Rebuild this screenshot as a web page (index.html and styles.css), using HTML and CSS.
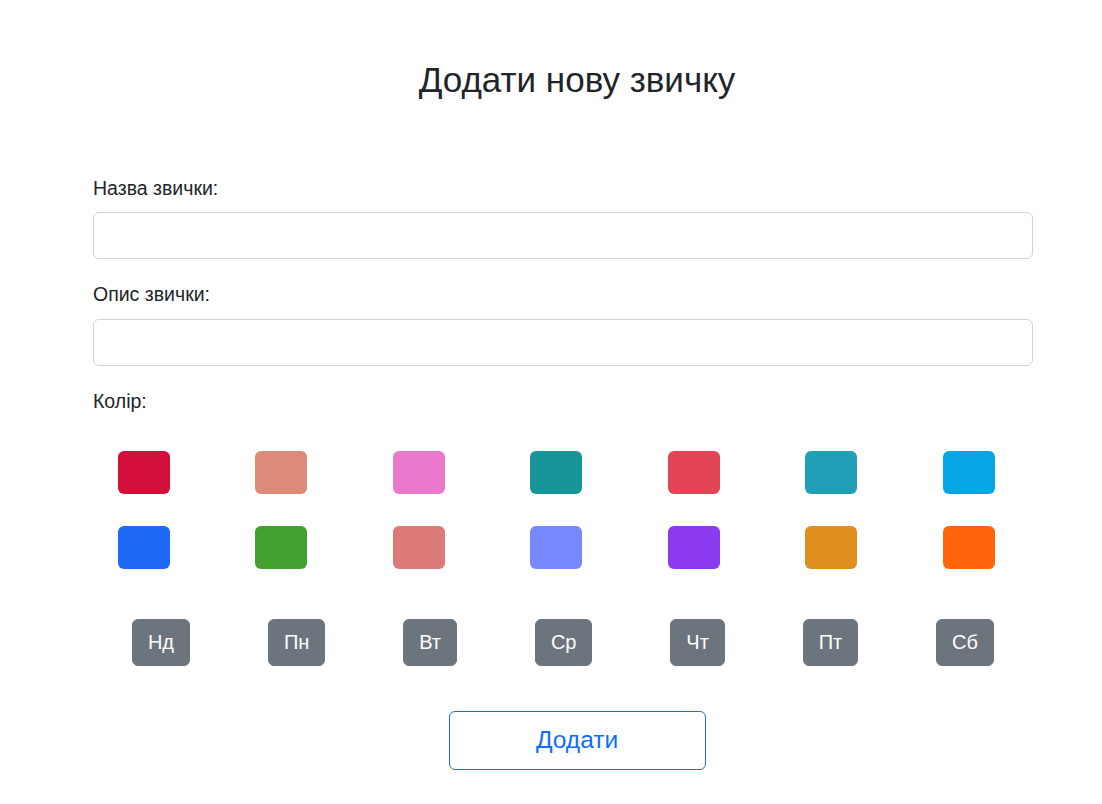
FILE: index.html
```html
<!DOCTYPE html>
<html lang="uk">
<head>
<meta charset="utf-8">
<title>Додати нову звичку</title>
<link rel="stylesheet" href="styles.css">
</head>
<body>
<main class="page">
  <h2 class="title">Додати нову звичку</h2>
  <form class="form">
    <div class="field">
      <label class="label" for="name">Назва звички:</label>
      <input class="input" id="name" type="text">
    </div>
    <div class="field">
      <label class="label" for="desc">Опис звички:</label>
      <input class="input" id="desc" type="text">
    </div>
    <div class="color-label">Колір:</div>
    <div class="swatches">
      <span class="swatch-cell"><span class="swatch" style="background:#d2103a"></span></span>
      <span class="swatch-cell"><span class="swatch" style="background:#db8b78"></span></span>
      <span class="swatch-cell"><span class="swatch" style="background:#ea78cc"></span></span>
      <span class="swatch-cell"><span class="swatch" style="background:#179597"></span></span>
      <span class="swatch-cell"><span class="swatch" style="background:#e44555"></span></span>
      <span class="swatch-cell"><span class="swatch" style="background:#20a0b6"></span></span>
      <span class="swatch-cell"><span class="swatch" style="background:#05a6e3"></span></span>
      <span class="swatch-cell"><span class="swatch" style="background:#1e69f6"></span></span>
      <span class="swatch-cell"><span class="swatch" style="background:#42a02e"></span></span>
      <span class="swatch-cell"><span class="swatch" style="background:#dc7a78"></span></span>
      <span class="swatch-cell"><span class="swatch" style="background:#7889ff"></span></span>
      <span class="swatch-cell"><span class="swatch" style="background:#8b3aef"></span></span>
      <span class="swatch-cell"><span class="swatch" style="background:#e08f1e"></span></span>
      <span class="swatch-cell"><span class="swatch" style="background:#ff640d"></span></span>
    </div>
    <div class="days">
      <button type="button" class="day">Нд</button>
      <button type="button" class="day">Пн</button>
      <button type="button" class="day">Вт</button>
      <button type="button" class="day">Ср</button>
      <button type="button" class="day">Чт</button>
      <button type="button" class="day">Пт</button>
      <button type="button" class="day">Сб</button>
    </div>
    <div class="actions">
      <button type="submit" class="submit">Додати</button>
    </div>
  </form>
</main>
</body>
</html>
```
FILE: styles.css
```css
* { box-sizing: border-box; }
html, body { margin: 0; padding: 0; background: #fff; }
body {
  font-family: "Liberation Sans", Arial, sans-serif;
  color: #212529;
  font-size: 16px;
  line-height: 1.5;
}
.page {
  margin-left: 93px;
  width: 968px;
  padding-top: 59px;
}
.title {
  margin: 0;
  text-align: center;
  font-weight: 400;
  font-size: 35px;
  line-height: 1.2;
}
.form {
  margin-top: 73px;
}
.field {
  display: flex;
  flex-direction: column;
  width: 940px;
  margin-bottom: 21px;
}
.label,
.color-label {
  display: block;
  font-size: 19.5px;
  line-height: 1.5;
}
.label {
  margin-bottom: 9px;
}
.input {
  width: 940px;
  height: 47px;
  border: 1px solid #ced4da;
  border-radius: 6px;
  font: inherit;
  padding: 8px 16px;
}
.swatches {
  margin-left: -18px;
  width: 962.5px;
  display: grid;
  grid-template-columns: repeat(7, 1fr);
  row-gap: 32px;
  margin-top: 35px;
}
.swatch-cell {
  display: flex;
  justify-content: center;
}
.swatch {
  display: block;
  width: 52px;
  height: 43px;
  border-radius: 6px;
}
.days {
  width: 940px;
  display: flex;
  justify-content: space-around;
  margin-top: 50px;
}
.day {
  background: #6c757d;
  color: #fff;
  border: 1px solid #6c757d;
  border-radius: 6px;
  font-family: inherit;
  font-size: 20px;
  line-height: 1.5;
  height: 47px;
  padding: 0 15px;
}
.actions {
  display: flex;
  justify-content: center;
  margin-top: 45px;
}
.submit {
  width: 257px;
  height: 59px;
  background: #fff;
  color: #0d6efd;
  border: 1px solid #1a6fd8;
  border-radius: 6px;
  font-family: inherit;
  font-size: 24.5px;
}
```
